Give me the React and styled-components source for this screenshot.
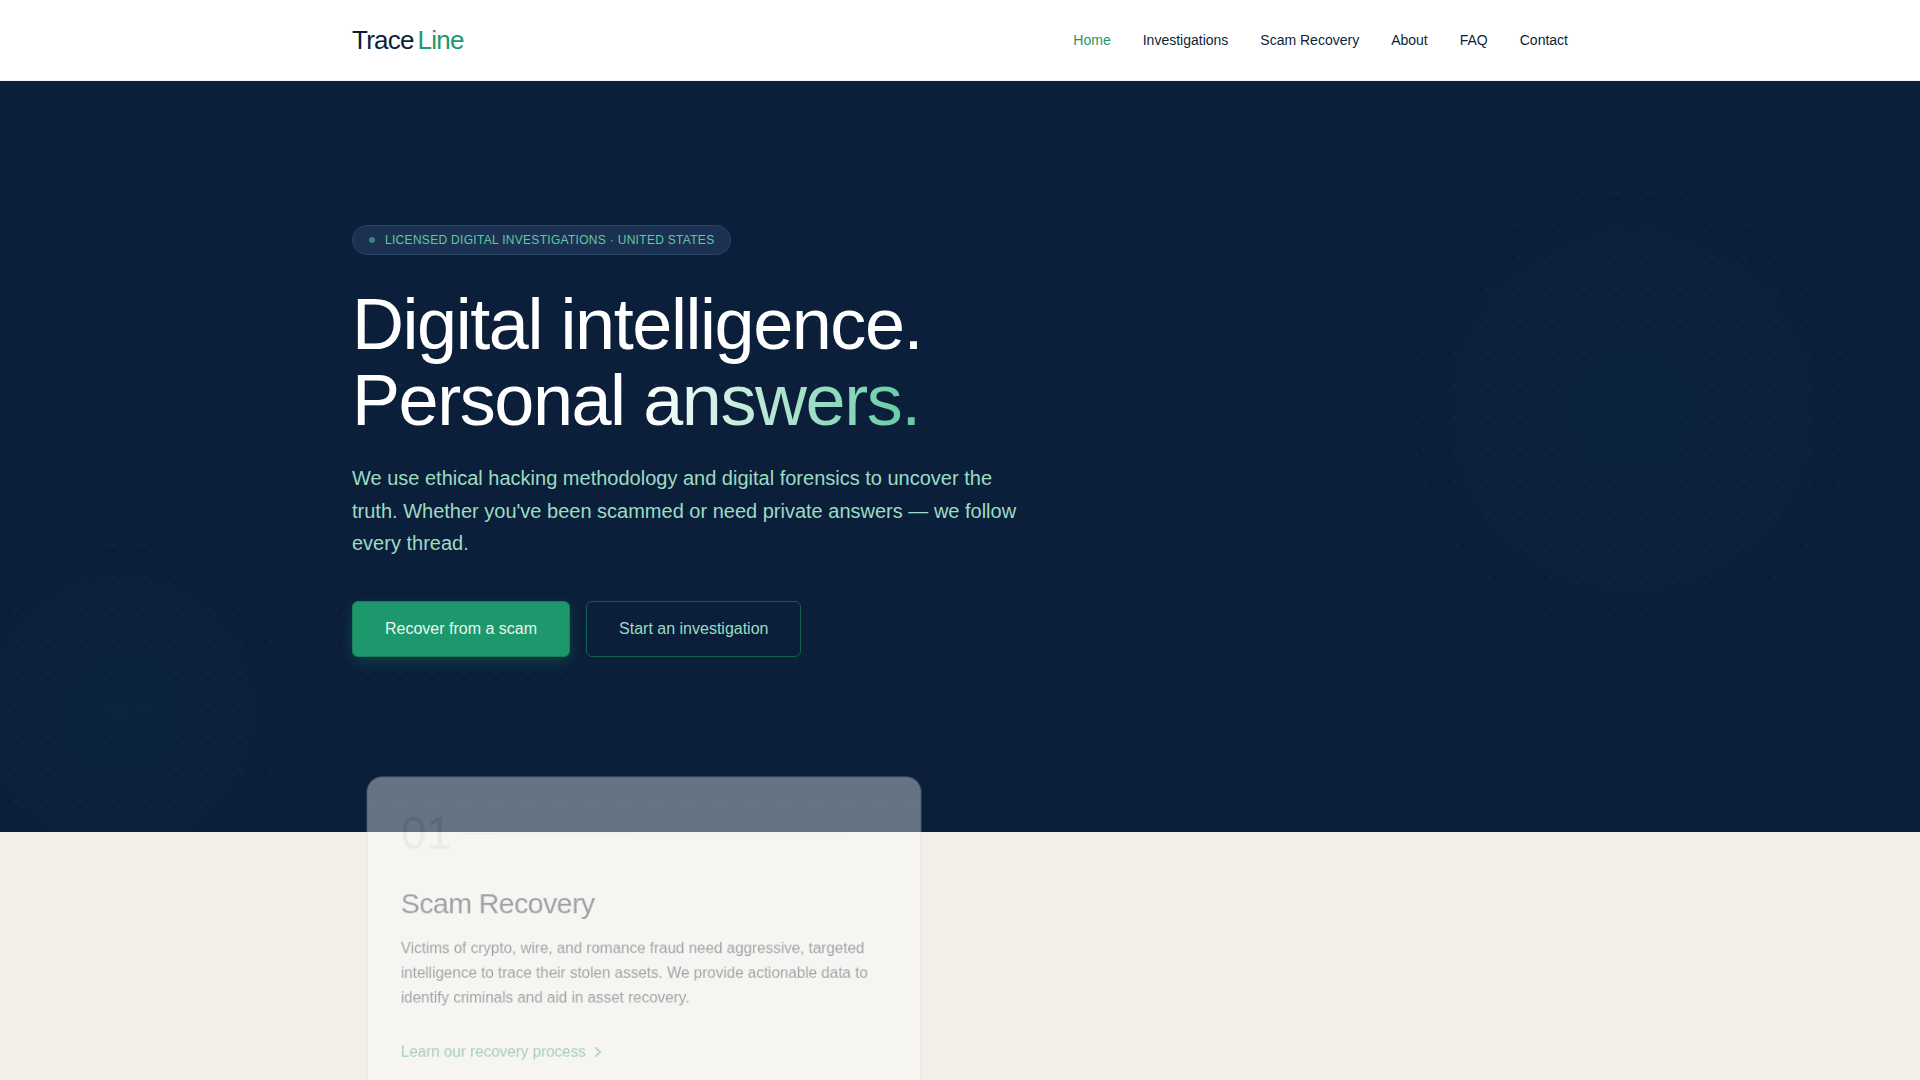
import React from 'react';
import styled, { createGlobalStyle } from 'styled-components';

const colors = {
	navy: '#0b1f3a',
	ink: '#12233d',
	green: '#1d976c',
	mint: '#5fc9a0',
	paleMint: '#9cdcc2',
	cream: '#f2efe8',
	white: '#ffffff'
};

const GlobalStyle = createGlobalStyle`
	*, *::before, *::after {
		box-sizing: border-box;
	}
	body {
		margin: 0;
		background: ${colors.cream};
		color: ${colors.navy};
		font-family: 'Liberation Sans', Arial, sans-serif;
		font-size: 16px;
		line-height: 24px;
	}
	a {
		text-decoration: none;
	}
	h1, h2, p, ul {
		margin: 0;
		padding: 0;
		font-weight: 400;
	}
`;

const Container = styled.div`
	max-width: 1280px;
	margin: 0 auto;
	padding: 0 32px;
`;

const Header = styled.header`
	background: ${colors.white};
	border-bottom: 1px solid #f4f7f1;
`;

const HeaderInner = styled(Container)`
	display: flex;
	align-items: center;
	justify-content: space-between;
	min-height: 80px;
`;

const Logo = styled.a`
	display: flex;
	gap: 4px;
	color: ${colors.navy};
	font-size: 26px;
	line-height: 32px;
	letter-spacing: -0.03em;
	span {
		color: ${colors.green};
	}
`;

const NavList = styled.ul`
	display: flex;
	gap: 32px;
	list-style: none;
`;

const NavLink = styled.a`
	color: ${({ $active }) => $active ? colors.green : colors.navy};
	font-size: 14px;
	line-height: 20px;
	&:hover {
		color: ${colors.green};
	}
`;

const glow = (radius, position, alpha) => `radial-gradient(
	circle ${radius}px at ${position},
	rgba(29, 151, 108, ${alpha}) 0,
	rgba(29, 151, 108, 0.01) 80%,
	rgba(5, 24, 52, 0.12) 91%,
	rgba(5, 24, 52, 0.12) 98%,
	transparent 100%
)`;

const Hero = styled.section`
	padding: 144px 0 175px;
	background-color: ${colors.navy};
	background-image:
		radial-gradient(circle, rgba(255, 255, 255, 0.06) 1px, transparent 1px),
		${glow(220, '85% 44%', 0.03)},
		${glow(165, '120px 84%', 0.035)};
	background-size: 32px 32px, auto, auto;
`;

const Badge = styled.div`
	display: flex;
	align-items: center;
	gap: 10px;
	width: fit-content;
	padding: 6px 16px;
	border: 1px solid #2a4365;
	border-radius: 15px;
	background: #1b3152;
	color: ${colors.mint};
	font-size: 12px;
	line-height: 16px;
	letter-spacing: 0.025em;
	text-transform: uppercase;
	&::before {
		content: '';
		width: 6px;
		height: 6px;
		border-radius: 50%;
		background: #3d8379;
	}
`;

const Title = styled.h1`
	margin-top: 31px;
	color: ${colors.white};
	font-size: 72px;
	line-height: 76px;
	letter-spacing: -0.02em;
`;

const Highlight = styled.span`
	background: linear-gradient(90deg, ${colors.white}, ${colors.mint});
	background-clip: text;
	-webkit-background-clip: text;
	color: transparent;
`;

const Lead = styled.p`
	max-width: 672px;
	margin-top: 24px;
	color: ${colors.paleMint};
	font-size: 20px;
	line-height: 1.625;
`;

const Actions = styled.div`
	display: flex;
	flex-wrap: wrap;
	gap: 16px;
	margin-top: 41px;
`;

const ActionLink = styled.a`
	padding: 15px 32px;
	border: 1px solid #12604f;
	border-radius: 6px;
	color: ${colors.paleMint};
`;

const PrimaryAction = styled(ActionLink)`
	border-color: #178059;
	background: ${colors.green};
	box-shadow: 0 5px 14px rgba(29, 151, 108, 0.25);
	color: #e8f7f0;
`;

const Services = styled.section`
	padding-bottom: 96px;
`;

const ServiceGrid = styled(Container)`
	display: grid;
	grid-template-columns: repeat(2, 1fr);
	gap: 48px;
`;

const Card = styled.article`
	margin-top: -64px;
	padding: 35px;
	border: 1px solid #c5cdd0;
	border-radius: 16px;
	background: ${colors.white};
	box-shadow: 0 4px 8px rgba(11, 31, 58, 0.04);
	color: ${colors.ink};
	opacity: ${({ $revealed }) => $revealed ? 1 : 0.38};
	transform: ${({ $revealed }) => $revealed ? 'none' : 'scale(0.95)'};
	will-change: opacity, transform;
`;

const CardTop = styled.div`
	display: flex;
	align-items: center;
	gap: 12px;
	color: #cdebdc;
	font-size: 48px;
	line-height: 48px;
	&::after {
		content: '';
		flex: 1;
		height: 1px;
		background: linear-gradient(90deg, #d5ebe0, transparent);
	}
`;

const CardTitle = styled.h2`
	margin-top: 32px;
	font-size: 30px;
	line-height: 36px;
	letter-spacing: -0.02em;
`;

const CardText = styled.p`
	margin-top: 16px;
	line-height: 26px;
`;

const CardLink = styled.a`
	display: inline-flex;
	align-items: center;
	gap: 8px;
	margin-top: 32px;
	color: ${colors.green};
`;

const navItems = ['Home', 'Investigations', 'Scam Recovery', 'About', 'FAQ', 'Contact'];

const toHref = (label) => `#${label.toLowerCase().replace(' ', '-')}`;

const ChevronIcon = () => (
	<svg width='10' height='12' viewBox='0 0 10 12' fill='none' aria-hidden='true'>
		<path d='M2 1.5 L7 6 L2 10.5' stroke='currentColor' strokeWidth='1.6' strokeLinecap='round' strokeLinejoin='round' />
	</svg>
);

const SiteHeader = () => (
	<Header>
		<HeaderInner>
			<Logo href='#home'>Trace<span>Line</span></Logo>
			<nav>
				<NavList>
					{navItems.map(label => (
						<li key={label}>
							<NavLink href={toHref(label)} $active={label === 'Home'}>{label}</NavLink>
						</li>
					))}
				</NavList>
			</nav>
		</HeaderInner>
	</Header>
);

const ServiceCard = ({ number, title, text, linkLabel, href, revealed }) => (
	<Card $revealed={revealed}>
		<CardTop>{number}</CardTop>
		<CardTitle>{title}</CardTitle>
		<CardText>{text}</CardText>
		<CardLink href={href}>
			{linkLabel}
			<ChevronIcon />
		</CardLink>
	</Card>
);

const App = () => (
	<React.Fragment>
		<GlobalStyle />
		<SiteHeader />
		<main>
			<Hero>
				<Container>
					<Badge>Licensed Digital Investigations · United States</Badge>
					<Title>
						Digital intelligence.<br />
						Personal <Highlight>answers.</Highlight>
					</Title>
					<Lead>
						We use ethical hacking methodology and digital forensics to uncover the truth.
						Whether you've been scammed or need private answers — we follow every thread.
					</Lead>
					<Actions>
						<PrimaryAction href='#scam-recovery'>Recover from a scam</PrimaryAction>
						<ActionLink href='#investigations'>Start an investigation</ActionLink>
					</Actions>
				</Container>
			</Hero>
			<Services>
				<ServiceGrid>
					<ServiceCard
						number='01'
						title='Scam Recovery'
						text='Victims of crypto, wire, and romance fraud need aggressive, targeted intelligence to trace their stolen assets. We provide actionable data to identify criminals and aid in asset recovery.'
						linkLabel='Learn our recovery process'
						href='#scam-recovery'
						revealed={false}
					/>
				</ServiceGrid>
			</Services>
		</main>
	</React.Fragment>
);

export default App;
